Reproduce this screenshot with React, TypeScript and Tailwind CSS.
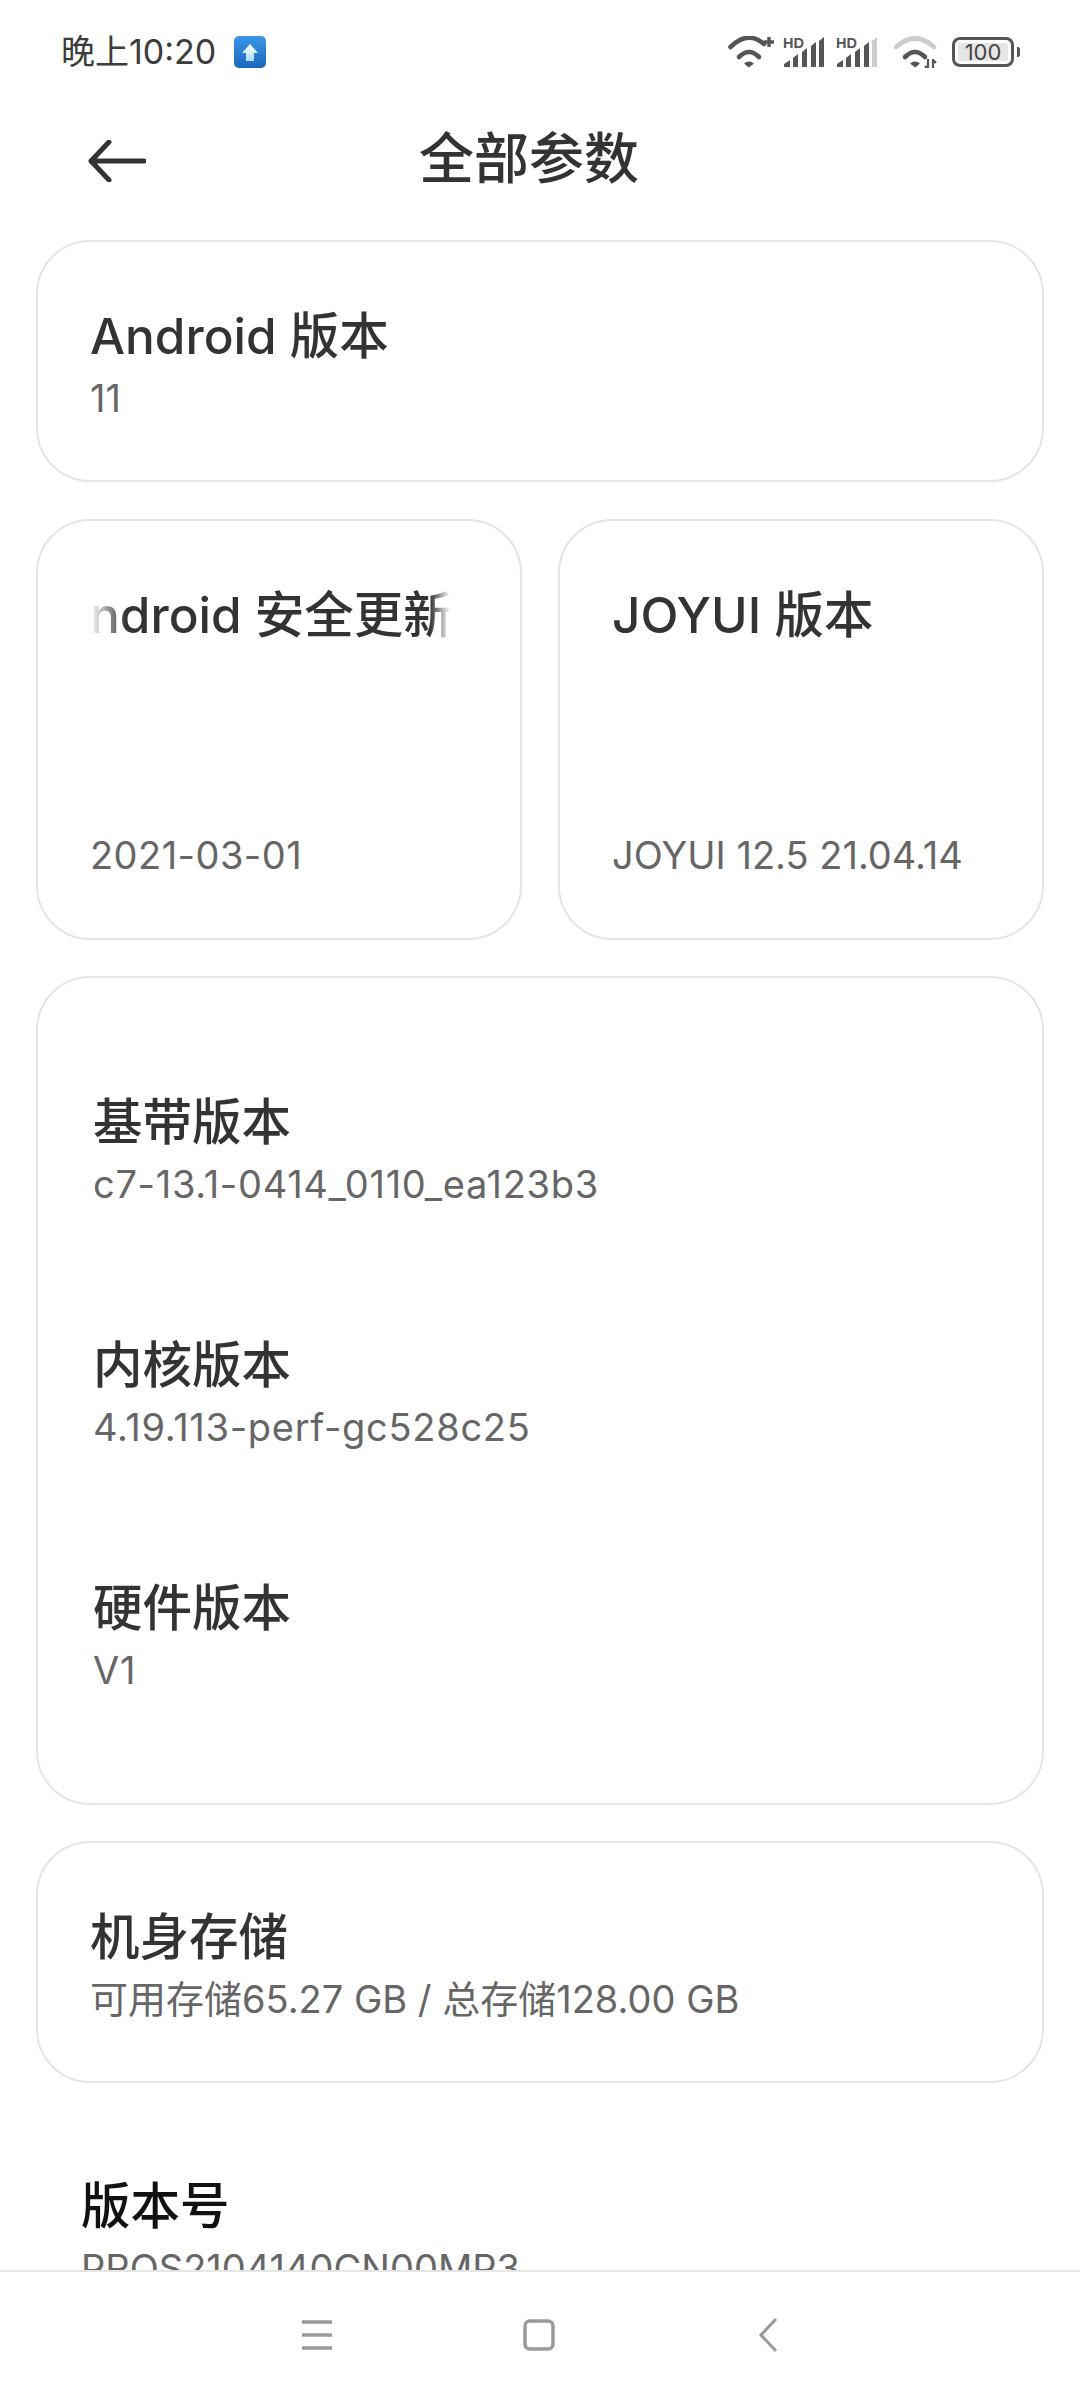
const font = { fontFamily: '"Inter", "Noto Sans CJK SC", sans-serif' };

function Signal({ full = true }: { full?: boolean }) {
  return (
    <svg width="42" height="32" viewBox="0 0 42 32">
      <text x="0" y="12" fontSize="14.5" fontWeight="700" fill="#555555" fontFamily="Liberation Sans">HD</text>
      <path d="M1 31 V28 L7 24 V31 Z" fill="#555555" />
      <path d="M10 31 V22 L15 18 V31 Z" fill="#555555" />
      <path d="M19 31 V16 L24 12 V31 Z" fill="#555555" />
      <path d="M28 31 V10 L33 6 V31 Z" fill="#555555" />
      <path d="M36 31 V5 L41 1 V31 Z" fill={full ? "#555555" : "#cccccc"} />
    </svg>
  );
}

function StatusBar() {
  return (
    <div className="flex h-[104px] items-center justify-between pl-[61px] pr-[60px]">
      <div className="flex items-center gap-[18px]">
        <span className="text-[34px] leading-[40px] text-[#3c3c3c]" style={font}>晚上10:20</span>
        <svg width="32" height="32" viewBox="0 0 32 32">
          <defs>
            <linearGradient id="upbg" x1="0" y1="0" x2="0" y2="1">
              <stop offset="0" stopColor="#3a97ea" />
              <stop offset="1" stopColor="#1b66bd" />
            </linearGradient>
            <linearGradient id="uparrow" x1="0" y1="0" x2="0" y2="1">
              <stop offset="0" stopColor="#ffffff" />
              <stop offset="1" stopColor="#a9dcfb" />
            </linearGradient>
          </defs>
          <rect width="32" height="32" rx="5" fill="url(#upbg)" />
          <path d="M16 8 L24 17 H20 V25 H12 V17 H8 Z" fill="url(#uparrow)" />
        </svg>
      </div>
      <div className="flex items-center">
        <svg className="mr-[8px]" width="47" height="32" viewBox="0 0 47 32" fill="none" strokeLinecap="round">
          <path d="M2.5 11 Q20 -6 36 8" stroke="#555555" strokeWidth="4.6" />
          <path d="M11 21 Q21 11 31 21" stroke="#555555" strokeWidth="4.6" />
          <path d="M21 31.5 L16 27.5 Q21 23.5 26 27.5 Z" fill="#555555" />
          <path d="M41 1 V11 M36 6 H46" stroke="#555555" strokeWidth="3.4" strokeLinecap="butt" />
        </svg>
        <div className="mr-[11px]"><Signal /></div>
        <div className="mr-[16px]"><Signal full={false} /></div>
        <svg className="mr-[14px]" width="44" height="32" viewBox="0 0 44 32" fill="none" strokeLinecap="round">
          <path d="M2 11 Q21 -6 40 11" stroke="#cccccc" strokeWidth="4.6" />
          <path d="M11 21 Q21 11 31 21" stroke="#555555" strokeWidth="4.6" />
          <path d="M21 31.5 L16 27.5 Q21 23.5 26 27.5 Z" fill="#555555" />
          <path d="M34 23 V34 M31 30 L34 33 M39 34 V23 M42 27 L39 24" stroke="#555555" strokeWidth="2.2" strokeLinecap="butt" />
        </svg>
        <div className="flex items-center">
          <div className="flex h-[30px] w-[62px] items-center justify-center rounded-[8px] border-[3.5px] border-[#555555] p-[3px]">
            <div className="flex h-full w-full items-center justify-center rounded-[2px] bg-[#e6e6e6] text-[22px] leading-none text-[#444444]" style={font}>100</div>
          </div>
          <div className="ml-[3px] h-[10px] w-[3px] rounded-r-[2px] bg-[#555555]" />
        </div>
      </div>
    </div>
  );
}

function Header() {
  return (
    <div className="relative flex h-[110px] items-center justify-center pr-[22px]">
      <svg className="absolute left-[88px] top-[36px]" width="58" height="42" viewBox="0 0 58 42" fill="none" stroke="#333333" strokeWidth="5" strokeLinecap="round" strokeLinejoin="round">
        <path d="M56 21 H3 M21 2 L3 21 L21 40" />
      </svg>
      <h1 className="pb-[2px] text-[55px] font-medium leading-[70px] text-[#333333]" style={font}>全部参数</h1>
    </div>
  );
}

function Title({ children }: { children: React.ReactNode }) {
  return <div className="text-[49.5px] font-medium leading-[64px] text-[#333333]" style={font}>{children}</div>;
}

function Sub({ children }: { children: React.ReactNode }) {
  return <div className="mt-[5px] text-[38px] leading-[50px] text-[#666666]" style={font}>{children}</div>;
}

function Row({ title, value }: { title: string; value: string }) {
  return (
    <div className="flex h-[243px] flex-col">
      <Title>{title}</Title>
      <div className="tracking-[0.7px]"><Sub>{value}</Sub></div>
    </div>
  );
}

export default function App() {
  return (
    <div className="flex h-[2400px] w-[1080px] flex-col overflow-hidden bg-white">
      <StatusBar />
      <Header />
      <div className="flex min-h-0 flex-1 flex-col overflow-hidden px-[36px] pt-[26px]">
        <div className="h-[242px] shrink-0 rounded-[54px] border-2 border-[#e5e5e5] pl-[52px] pt-[62px]">
          <Title>Android 版本</Title>
          <Sub>11</Sub>
        </div>
        <div className="mt-[37px] flex shrink-0 gap-[36px]">
          <div className="flex h-[421px] w-[486px] flex-col justify-between rounded-[54px] border-2 border-[#e5e5e5] pb-[58px] pl-[52px] pt-[62px]">
            <div className="w-[360px] overflow-hidden whitespace-nowrap [mask-image:linear-gradient(to_right,transparent,black_36px,black_340px,transparent)]">
              <div className="ml-[-35px]"><Title>Android 安全更新</Title></div>
            </div>
            <div className="tracking-[0.45px]"><Sub>2021-03-01</Sub></div>
          </div>
          <div className="flex h-[421px] w-[486px] flex-col justify-between rounded-[54px] border-2 border-[#e5e5e5] pb-[58px] pl-[52px] pt-[62px]">
            <Title>JOYUI 版本</Title>
            <Sub>JOYUI 12.5 21.04.14</Sub>
          </div>
        </div>
        <div className="mt-[36px] h-[829px] shrink-0 rounded-[54px] border-2 border-[#e5e5e5] pl-[55px] pt-[112px]">
          <Row title="基带版本" value="c7-13.1-0414_0110_ea123b3" />
          <Row title="内核版本" value="4.19.113-perf-gc528c25" />
          <Row title="硬件版本" value="V1" />
        </div>
        <div className="mt-[36px] h-[242px] shrink-0 rounded-[54px] border-2 border-[#e5e5e5] pl-[52px] pt-[62px]">
          <Title>机身存储</Title>
          <Sub>可用存储65.27 GB / 总存储128.00 GB</Sub>
        </div>
        <div className="mt-[91px] shrink-0 pl-[45px]">
          <div className="text-[49.5px] font-medium leading-[64px] text-[#111111]" style={font}>版本号</div>
          <Sub>PROS2104140CN00MP3</Sub>
        </div>
      </div>
      <div className="flex h-[130px] shrink-0 items-center border-t-2 border-[#e6e6e6] bg-white pb-[2px] pl-[301px]">
        <svg width="32" height="32" viewBox="0 0 32 32" stroke="#999999" strokeWidth="3.5">
          <path d="M1 3 H31 M1 16 H31 M1 29 H31" />
        </svg>
        <svg className="ml-[190px]" width="32" height="32" viewBox="0 0 32 32" fill="none" stroke="#999999" strokeWidth="3.5">
          <rect x="2" y="2" width="28" height="28" rx="5" />
        </svg>
        <svg className="ml-[203px]" width="20" height="34" viewBox="0 0 20 34" fill="none" stroke="#999999" strokeWidth="3">
          <path d="M18 1 L3 17 L18 33" />
        </svg>
      </div>
    </div>
  );
}
